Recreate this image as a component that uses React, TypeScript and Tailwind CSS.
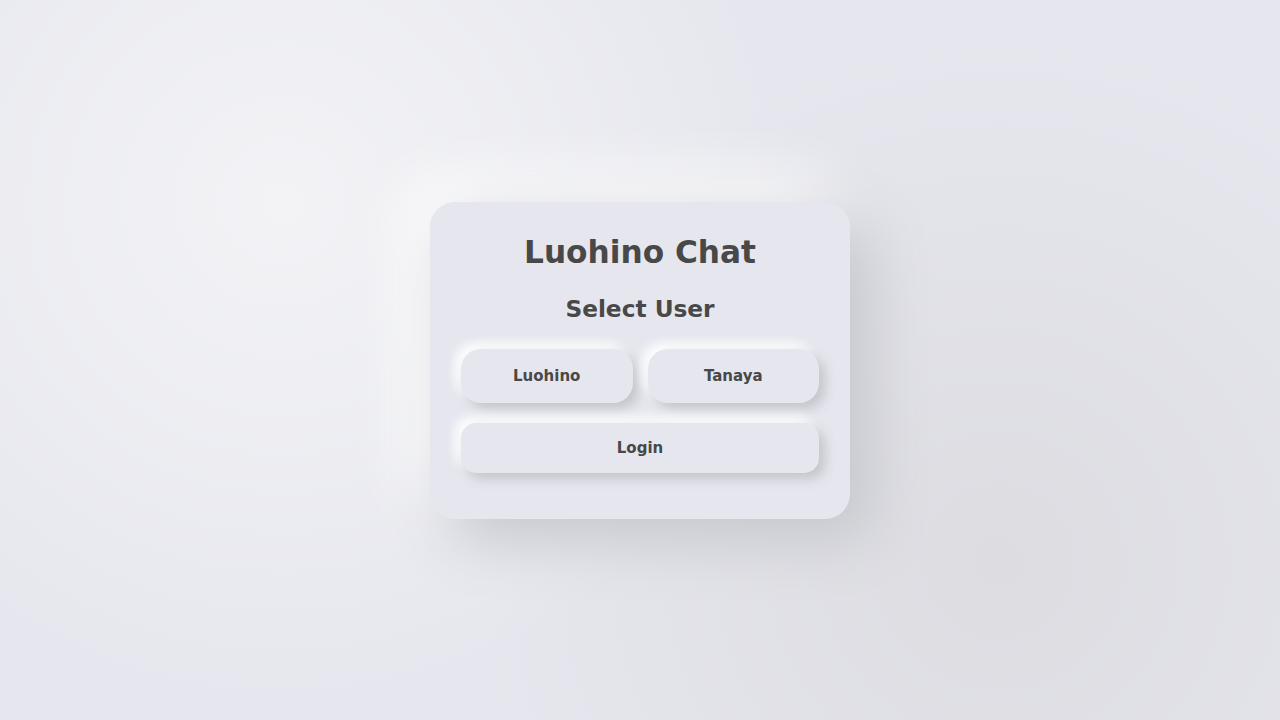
import React from "react";

export default function App() {
  return (
    <div
      className="w-[1280px] h-[720px] flex items-center justify-center bg-[#e6e7ee]"
      style={{ fontFamily: '"DejaVu Sans", sans-serif' }}
    >
      <div className="absolute inset-0 bg-[radial-gradient(circle_at_22%_28%,#f3f3f6_0%,rgba(243,243,246,0)_45%),radial-gradient(circle_at_78%_78%,#dcdce1_0%,rgba(220,220,225,0)_45%)]" />
      <div className="relative w-[420px] rounded-[25px] bg-[#e5e6ee] px-[31px] pt-[32px] pb-[46px] shadow-[20px_20px_60px_#c4c5cb,-20px_-20px_60px_#ffffff] text-center text-[#484848]">
        <h1 className="text-[31.2px] font-bold leading-[37px] mb-[24px]">Luohino Chat</h1>
        <h2 className="text-[23.25px] font-bold leading-[28px] mb-[26px]">Select User</h2>
        <div className="flex gap-[15px] mb-[20px]">
          <button className="flex-1 h-[54px] pt-[2px] rounded-[20px] bg-[#e5e6ee] text-[15px] font-bold text-[#484848] shadow-[6px_6px_12px_#c4c5cb,-6px_-6px_12px_#ffffff]">
            Luohino
          </button>
          <button className="flex-1 h-[54px] pt-[2px] rounded-[20px] bg-[#e5e6ee] text-[15px] font-bold text-[#484848] shadow-[6px_6px_12px_#c4c5cb,-6px_-6px_12px_#ffffff]">
            Tanaya
          </button>
        </div>
        <button className="w-full h-[50px] pt-[2px] rounded-[15px] bg-[#e5e6ee] text-[15px] font-bold text-[#484848] shadow-[6px_6px_12px_#c4c5cb,-6px_-6px_12px_#ffffff]">
          Login
        </button>
      </div>
    </div>
  );
}
